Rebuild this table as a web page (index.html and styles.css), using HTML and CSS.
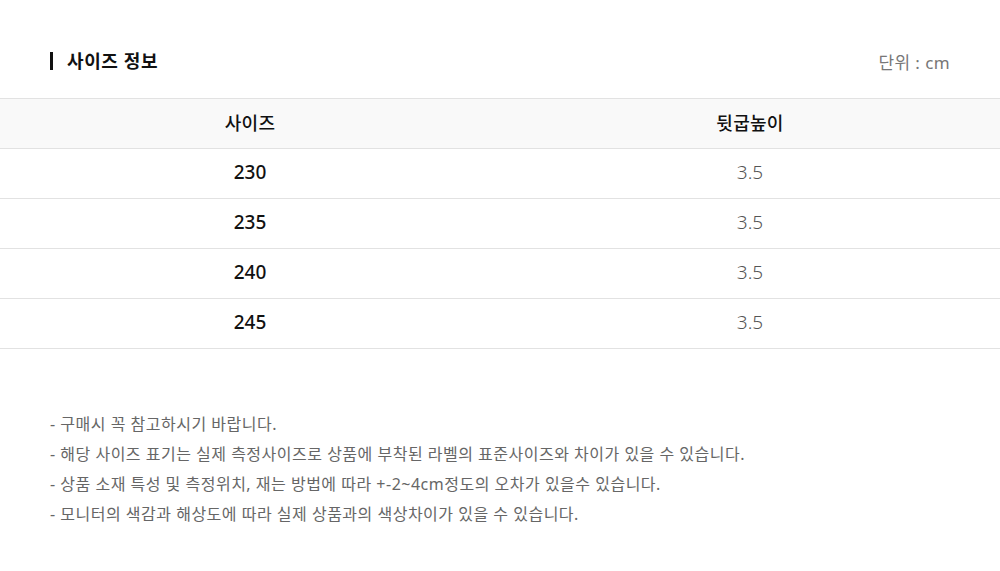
FILE: index.html
```html
<!DOCTYPE html>
<html lang="ko">
<head>
    <meta charset="UTF-8">
    <meta name="viewport" content="width=device-width, initial-scale=1.0">
    <title>사이즈 정보</title>
    <link rel="stylesheet" href="styles.css">
</head>
<body>
    <div class="size-info">
        <div class="size-header">
            <h2 class="size-title">사이즈 정보</h2>
            <span class="size-unit">단위 : cm</span>
        </div>
        <table class="size-table">
            <thead>
                <tr>
                    <th>사이즈</th>
                    <th>뒷굽높이</th>
                </tr>
            </thead>
            <tbody>
                <tr><td class="size">230</td><td class="value">3.5</td></tr>
                <tr><td class="size">235</td><td class="value">3.5</td></tr>
                <tr><td class="size">240</td><td class="value">3.5</td></tr>
                <tr><td class="size">245</td><td class="value">3.5</td></tr>
            </tbody>
        </table>
        <ul class="size-notes">
            <li>- 구매시 꼭 참고하시기 바랍니다.</li>
            <li>- 해당 사이즈 표기는 실제 측정사이즈로 상품에 부착된 라벨의 표준사이즈와 차이가 있을 수 있습니다.</li>
            <li>- 상품 소재 특성 및 측정위치, 재는 방법에 따라 +-2~4cm정도의 오차가 있을수 있습니다.</li>
            <li>- 모니터의 색감과 해상도에 따라 실제 상품과의 색상차이가 있을 수 있습니다.</li>
        </ul>
    </div>
</body>
</html>
```
FILE: styles.css
```css
body {
    margin: 0;
    background-color: #ffffff;
    font-family: "Noto Sans", "Noto Sans CJK KR", sans-serif;
    color: #111;
}
.size-info {
    width: 1000px;
}
.size-header {
    display: flex;
    justify-content: space-between;
    align-items: center;
    padding: 45px 50px 0;
    height: 32px;
    margin-bottom: 21px;
}
.size-title {
    margin: 0;
    font-size: 18px;
    font-weight: 700;
    line-height: 18px;
    letter-spacing: 0.6px;
    border-left: 3px solid #111;
    padding-left: 14px;
    color: #111;
}
.size-unit {
    font-size: 17px;
    letter-spacing: 0.4px;
    color: #777;
}
.size-table {
    width: 100%;
    border-collapse: collapse;
    border-top: 1px solid #e2e2e2;
}
.size-table th,
.size-table td {
    width: 50%;
    height: 46px;
    padding: 0 0 3px;
    text-align: center;
    border-bottom: 1px solid #e2e2e2;
    font-size: 19px;
}
.size-table th {
    background-color: #f9f9f9;
    font-size: 18px;
    font-weight: 500;
    letter-spacing: 0.3px;
    color: #111;
}
.size-table td.size {
    font-weight: 500;
    color: #111;
}
.size-table td.value {
    font-weight: 300;
    color: #555;
}
.size-notes {
    list-style: none;
    margin: 60px 0 0;
    padding: 0 50px;
    font-size: 16px;
    letter-spacing: 0.5px;
    line-height: 30px;
    color: #666;
}
```
